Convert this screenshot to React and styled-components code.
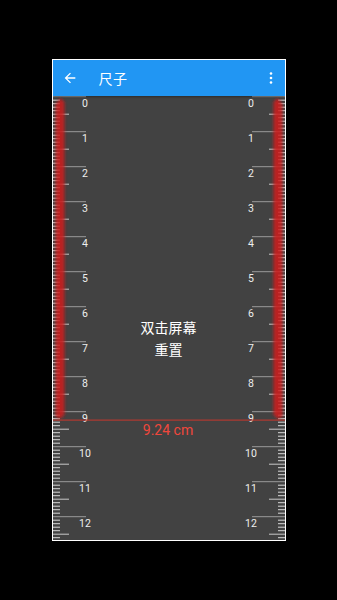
import React from 'react'
import styled, { createGlobalStyle } from 'styled-components'

const GlobalStyle = createGlobalStyle`
  html, body {
    margin: 0;
    padding: 0;
    background: #000;
    font-family: Roboto, "Noto Sans CJK SC", sans-serif;
  }
`

const Page = styled.div`
  width: 337px;
  height: 600px;
  display: flex;
  align-items: center;
  justify-content: center;
`

const Screen = styled.div`
  width: 232px;
  height: 480px;
  border: 1px solid #fff;
  display: flex;
  flex-direction: column;
  background: #424242;
  overflow: hidden;
`

const Toolbar = styled.div`
  height: 36px;
  flex: none;
  display: flex;
  align-items: center;
  background: #2196f3;
  color: #fff;
  padding: 0 10px 0 9px;
  position: relative;
  z-index: 1;
  box-shadow: 0 1px 2px rgba(0, 0, 0, 0.35);
`

const IconButton = styled.div`
  width: ${p => p.$w || 16}px;
  height: 36px;
  display: flex;
  align-items: center;
  justify-content: center;
`

const Title = styled.div`
  flex: 1;
  margin-left: 21px;
  font-size: 14px;
  font-family: "Noto Sans CJK SC", sans-serif;
  letter-spacing: 0.5px;
`

const Content = styled.div`
  flex: 1;
  position: relative;
  display: flex;
  flex-direction: column;
  align-items: center;
`

const RulerCanvas = styled.svg`
  position: absolute;
  left: 0;
  top: 0;
`

const Hint = styled.div`
  position: relative;
  margin-top: 220px;
  color: #fff;
  font-size: 14px;
  line-height: 22px;
  text-align: center;
  font-family: "Noto Sans CJK SC", sans-serif;
`

const W = 232
const H = 444
const CM = 35
const Y0 = 0.7
const MEASURE = 9.24

const Ruler = () => {
  const ticks = []
  const labels = []
  for (let i = 0; i <= 130; i++) {
    const y = Y0 + i * (CM / 10)
    if (y > H) break
    const len = i % 10 === 0 ? 33 : i % 5 === 0 ? 16 : 7
    const color = i % 10 === 0 ? '#9a9a9a' : i % 5 === 0 ? '#c8c8c8' : '#d8d8d8'
    ticks.push(<line key={'l' + i} x1={0} x2={len} y1={y} y2={y} stroke={color} strokeWidth={1} />)
    ticks.push(<line key={'r' + i} x1={W - len} x2={W} y1={y} y2={y} stroke={color} strokeWidth={1} />)
    if (i % 10 === 0) {
      const n = i / 10
      labels.push(<text key={'tl' + n} x={32} y={y + 10} textAnchor="middle">{n}</text>)
      labels.push(<text key={'tr' + n} x={198} y={y + 10} textAnchor="middle">{n}</text>)
    }
  }
  const my = Y0 + MEASURE * CM

  return (
    <RulerCanvas width={W} height={H} viewBox={`0 0 ${W} ${H}`}>
      <defs>
        <filter id="glow" x="-1" y="-0.1" width="3" height="1.2">
          <feGaussianBlur stdDeviation="1.6" />
        </filter>
      </defs>
      {ticks}
      <g fill="#d01a1a" opacity="0.85" filter="url(#glow)">
        <path d={`M2.5 ${my - 3} L2.5 8 L7.5 2 L11.5 6 L11.5 ${my - 5} L7 ${my - 1} Z`} />
        <path d={`M${W - 2.5} ${my - 3} L${W - 2.5} 8 L${W - 7.5} 2 L${W - 11.5} 6 L${W - 11.5} ${my - 5} L${W - 7} ${my - 1} Z`} />
      </g>
      <g fill="#eeeeee" fontSize="10.5" fontFamily="Roboto, sans-serif">
        {labels}
      </g>
      <line x1={0} x2={W} y1={my} y2={my} stroke="#c8382e" strokeWidth={1} />
      <text x={W / 2 - 1} y={my + 15} textAnchor="middle" fill="#f0473c" fontSize="14" fontFamily="Roboto, sans-serif">
        {MEASURE} cm
      </text>
    </RulerCanvas>
  )
}

export default function App() {
  return (
    <>
      <GlobalStyle />
      <Page>
        <Screen>
          <Toolbar>
            <IconButton>
              <svg width="16" height="16" viewBox="0 0 24 24">
                <path d="M20 11H7.83l5.59-5.59L12 4l-8 8 8 8 1.41-1.41L7.83 13H20v-2z" fill="#fff" />
              </svg>
            </IconButton>
            <Title>尺子</Title>
            <IconButton $w={8}>
              <svg width="4" height="12" viewBox="0 0 4 12">
                <circle cx="2" cy="1.5" r="1.3" fill="#fff" />
                <circle cx="2" cy="6" r="1.3" fill="#fff" />
                <circle cx="2" cy="10.5" r="1.3" fill="#fff" />
              </svg>
            </IconButton>
          </Toolbar>
          <Content>
            <Ruler />
            <Hint>
              双击屏幕<br />重置
            </Hint>
          </Content>
        </Screen>
      </Page>
    </>
  )
}
